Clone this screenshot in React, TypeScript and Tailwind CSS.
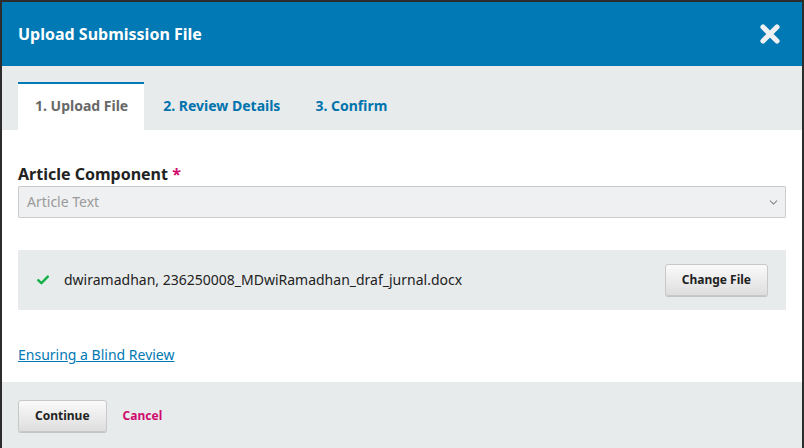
import { ChevronDown } from 'lucide-react';

const fontStack = "font-['Noto_Sans',_'Open_Sans',_sans-serif]";

function CloseIcon() {
  return (
    <svg viewBox="0 0 24 24" className="h-6 w-6" aria-hidden="true">
      <path d="M5 5 L19 19 M19 5 L5 19" stroke="#eef0f1" strokeWidth="5.2" strokeLinecap="round" fill="none" />
    </svg>
  );
}

function CheckIcon() {
  return (
    <svg viewBox="0 0 12 10" className="h-[10px] w-[12px]" aria-hidden="true">
      <path d="M1.2 5.2 L4.4 8.2 L10.8 1.6" stroke="#12b047" strokeWidth="2.4" strokeLinecap="round" strokeLinejoin="round" fill="none" />
    </svg>
  );
}

const buttonClass =
  'inline-flex h-8 items-center justify-center rounded-[3px] border border-[#c8c8c8] bg-gradient-to-b from-[#fafafa] to-[#dedede] px-4 text-xs font-bold text-[#222] shadow-[0_1px_0_#c4c4c4]';

const tabs = [
  { label: '1. Upload File', active: true },
  { label: '2. Review Details', active: false },
  { label: '3. Confirm', active: false },
];

export default function App() {
  return (
    <div className={`h-[448px] overflow-hidden bg-[#2c2c2c] px-[2px] pt-[2px] ${fontStack}`}>
      <div className="flex h-full flex-col bg-white">
        <header className="flex h-16 shrink-0 items-center justify-between bg-[#0079b4] pl-4 pr-5">
          <h1 className="text-base font-bold text-white">Upload Submission File</h1>
          <button type="button" aria-label="Close" className="flex items-center">
            <CloseIcon />
          </button>
        </header>

        <nav className="flex h-16 shrink-0 items-end gap-[2px] bg-[#e8ebec] px-4">
          {tabs.map((tab) => (
            <div
              key={tab.label}
              className={`flex h-12 items-center pb-[2px] pl-[17px] pr-4 text-sm font-bold ${
                tab.active
                  ? 'border-t-2 border-[#0079b4] bg-white text-[#686868]'
                  : 'pt-[2px] text-[#0073ad]'
              }`}
            >
              {tab.label}
            </div>
          ))}
        </nav>

        <div className="px-4 pt-8">
          <label className="block text-base font-bold leading-6 text-[#222]">
            Article Component <span className="text-[#d00a6c]">*</span>
          </label>
          <div className="relative flex h-8 items-center rounded-[1px] border border-[#cccccc] bg-[#eff0f1] pl-2 text-sm text-[#9a9a9a]">
            Article Text
            <ChevronDown className="absolute right-[5px] top-[9px] h-[13px] w-[13px] text-[#8a8a8a]" strokeWidth={2} />
          </div>

          <div className="mt-8 flex h-[60px] items-center bg-[#e8ebec] pl-[19px] pr-[18px]">
            <CheckIcon />
            <span className="ml-[15px] flex-1 text-sm text-[#222]">
              dwiramadhan, 236250008_MDwiRamadhan_draf_jurnal.docx
            </span>
            <button type="button" className={buttonClass}>
              Change File
            </button>
          </div>

          <div className="mt-8 pb-4 leading-6">
            <a href="#" className="text-sm text-[#0079b4] underline">
              Ensuring a Blind Review
            </a>
          </div>
        </div>

        <footer className="flex flex-1 items-start gap-4 bg-[#e8ebec] px-4 pt-[18px]">
          <button type="button" className={buttonClass}>
            Continue
          </button>
          <a href="#" className="flex h-8 items-center text-xs font-bold text-[#d00a6c]">
            Cancel
          </a>
        </footer>
      </div>
    </div>
  );
}
